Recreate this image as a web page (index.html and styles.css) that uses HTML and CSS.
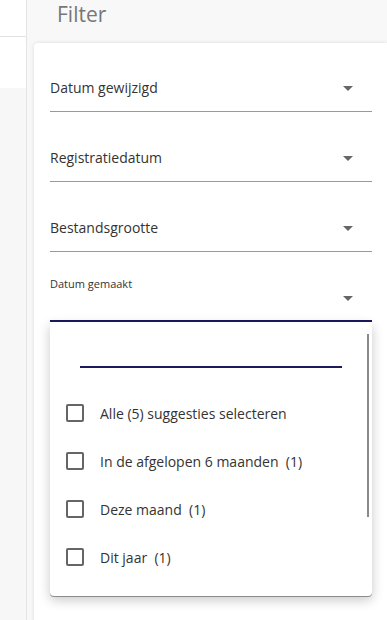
FILE: index.html
```html
<html>
    <head>
        <link rel="stylesheet" href="styles.css">
    </head>
    <body>
    <div class="page">
        <div class="side">
            <div class="side-top"></div>
            <div class="side-mid"></div>
            <div class="side-rest"></div>
        </div>

        <div class="main">
            <h2 class="title">Filter</h2>

            <div class="card">
                <div class="field">
                    <span class="label">Datum gewijzigd</span>
                    <span class="arrow"></span>
                </div>
                <div class="field">
                    <span class="label">Registratiedatum</span>
                    <span class="arrow"></span>
                </div>
                <div class="field">
                    <span class="label">Bestandsgrootte</span>
                    <span class="arrow"></span>
                </div>
                <div class="field open">
                    <span class="label small">Datum gemaakt</span>
                    <span class="arrow"></span>
                </div>

                <div class="dropdown">
                    <div class="search"><div class="search-line"></div></div>
                    <div class="options">
                        <label class="option"><span class="box"></span>Alle (5) suggesties selecteren</label>
                        <label class="option"><span class="box"></span>In de afgelopen 6 maanden&nbsp; (1)</label>
                        <label class="option"><span class="box"></span>Deze maand&nbsp; (1)</label>
                        <label class="option"><span class="box"></span>Dit jaar&nbsp; (1)</label>
                    </div>
                    <div class="scrollbar"></div>
                </div>
            </div>
        </div>
    </div>
    </body>
</html>
```

FILE: styles.css
```css
body {
    margin: 0;
    background-color: #f8f8f8;
    font-family: "Open Sans", "Liberation Sans", sans-serif;
    color: #333;
}
.page {
    display: flex;
    height: 620px;
    overflow: hidden;
}
.side {
    width: 26px;
    border-right: 1px solid #e4e4e4;
    display: flex;
    flex-direction: column;
}
.side-top {
    height: 36px;
    background-color: #fff;
    border-bottom: 1px solid #e2e2e2;
}
.side-mid {
    height: 51px;
    background-color: #fff;
}
.side-rest {
    flex: 1;
    background-color: #f7f7f7;
}
.main {
    flex: 1;
    padding-left: 7px;
}
.title {
    margin: 0;
    height: 43px;
    padding-left: 23px;
    font-size: 21px;
    font-weight: normal;
    line-height: 28px;
    color: #777;
}
.card {
    background-color: #fff;
    border-radius: 4px 0 0 0;
    box-shadow: 0 0 4px rgba(0, 0, 0, 0.12);
    padding: 21px 15px 0 16px;
    height: 600px;
}
.field {
    height: 48px;
    box-sizing: border-box;
    border-bottom: 1px solid #999;
    display: flex;
    align-items: flex-end;
    justify-content: space-between;
    padding: 0 19px 12px 0;
    margin-bottom: 22px;
}
.label {
    font-size: 14px;
    line-height: 22px;
}
.arrow {
    width: 0;
    height: 0;
    border-left: 5px solid transparent;
    border-right: 5px solid transparent;
    border-top: 5px solid #666;
    margin-bottom: 8px;
}
.field.open {
    display: grid;
    grid-template-columns: 1fr auto;
    border-bottom: 2px solid #1b1b5e;
    margin-bottom: 0;
    padding-bottom: 11px;
}
.label.small {
    font-size: 11px;
    line-height: 16px;
    align-self: start;
    padding-top: 2px;
}
.field.open .arrow {
    align-self: end;
}
.dropdown {
    position: relative;
    background-color: #fff;
    height: 274px;
    border-radius: 0 0 4px 4px;
    box-shadow: 0 1px 0 #8c8c8c, 0 4px 12px rgba(0, 0, 0, 0.22);
}
.search {
    padding: 44px 30px 0 30px;
}
.search-line {
    height: 2px;
    background-color: #1b1b5e;
}
.options {
    padding: 21px 0 0 16px;
}
.option {
    display: flex;
    align-items: center;
    height: 48px;
    font-size: 14px;
    color: #333;
}
.box {
    width: 14px;
    height: 14px;
    border: 2px solid #666;
    border-radius: 2px;
    margin-right: 16px;
}
.scrollbar {
    position: absolute;
    top: 12px;
    right: 3px;
    width: 2px;
    height: 183px;
    background-color: #8a8a8a;
}
```
